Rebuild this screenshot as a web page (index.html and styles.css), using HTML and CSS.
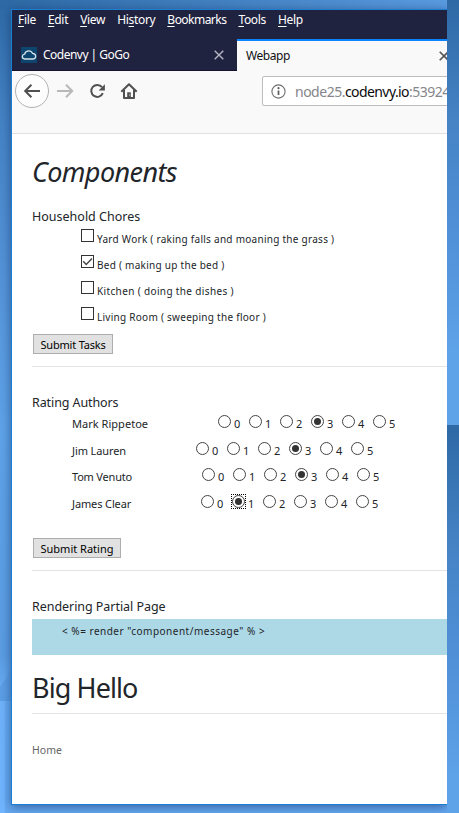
FILE: index.html
```
<!DOCTYPE html>
<html lang="en">
<head>
<meta charset="utf-8">
<title>Webapp</title>
<link rel="stylesheet" href="styles.css">
</head>
<body>
<div class="desktop">
  <div class="view">
    <div class="window">
      <nav class="menu">
        <span class="m-file"><u>F</u>ile</span>
        <span class="m-edit"><u>E</u>dit</span>
        <span class="m-view"><u>V</u>iew</span>
        <span class="m-history">Hi<u>s</u>tory</span>
        <span class="m-bookmarks"><u>B</u>ookmarks</span>
        <span class="m-tools"><u>T</u>ools</span>
        <span><u>H</u>elp</span>
      </nav>
      <div class="tabs">
        <div class="tab">
          <svg class="favicon" width="16" height="16" viewBox="0 0 16 16"><rect width="16" height="16" fill="#0e456f"/><path d="M3.8 12 Q1.3 11.6 1.3 9.4 Q1.4 7.4 3.6 7.1 Q4.6 3.8 7.7 3.8 Q10.5 3.8 11.5 6.3 Q14.6 6.6 14.7 9.2 Q14.6 11.7 12.2 12 Z" fill="none" stroke="#d5e1ea" stroke-width="1.3"/></svg>
          <span class="tab-title">Codenvy | GoGo</span>
          <svg class="close" width="10" height="10" viewBox="0 0 10 10"><path d="M.7 .7 9.3 9.3M9.3 .7 .7 9.3" stroke="#b4b5c2" stroke-width="1.4"/></svg>
        </div>
        <div class="tab active">
          <span class="tab-title webapp">Webapp</span>
          <svg class="close" width="10" height="10" viewBox="0 0 10 10"><path d="M.7 .7 9.3 9.3M9.3 .7 .7 9.3" stroke="#555" stroke-width="1.6"/></svg>
        </div>
      </div>
      <div class="toolbar">
        <svg class="nav-icons" width="140" height="36" viewBox="12 73 140 36" fill="none">
          <circle cx="32" cy="91" r="16.5" fill="#fdfdfd" stroke="#b2b2b2"/>
          <path d="M40 91H25.5M31.4 84.8 25.2 91 31.4 97.2" stroke="#505050" stroke-width="2"/>
          <path d="M57 91H71.5M66 84.8 72.2 91 66 97.2" stroke="#b8b8b8" stroke-width="2"/>
          <path d="M102 87.2A6 6 0 1 0 102.8 93.2" stroke="#505050" stroke-width="2"/>
          <path d="M104.9 84.2V90.4H98.6Z" fill="#505050"/>
          <path d="M121.3 91.8 129 84.2 136.7 91.8M124 90V98H134V90" stroke="#505050" stroke-width="2" stroke-linejoin="round"/>
          <path d="M127.2 98V92.3H130.8V98Z" fill="#505050"/><path d="M129.2 95H130" stroke="#fff"/>
        </svg>
        <div class="address">
          <svg width="15" height="15" viewBox="0 0 15 15"><circle cx="7.5" cy="7.5" r="6.6" fill="none" stroke="#6d6d6d" stroke-width="1.1"/><path d="M7.5 6.5V11" stroke="#5c5c5c" stroke-width="1.7"/><circle cx="7.5" cy="4.2" r="1.1" fill="#5c5c5c"/></svg>
          <span class="url">node25.<b>codenvy.io</b>:53924</span>
        </div>
      </div>
      <main class="page">
        <h1 class="title">Components</h1>

        <h2 class="chores">Household Chores</h2>
        <ul class="checks">
          <li><i class="box"></i><span class="c1">Yard Work ( raking falls and moaning the grass )</span></li>
          <li><i class="box"><svg width="11" height="11" viewBox="0 0 11 11"><path d="M1.2 5.3 4.2 8.4 10 2.4" fill="none" stroke="#444" stroke-width="1.4"/></svg></i><span class="c2">Bed ( making up the bed )</span></li>
          <li><i class="box"></i><span class="c3">Kitchen ( doing the dishes )</span></li>
          <li><i class="box"></i><span class="c4">Living Room ( sweeping the floor )</span></li>
        </ul>
        <button class="tasks">Submit Tasks</button>
        <hr>

        <h2 class="authors">Rating Authors</h2>
        <div class="rate r1"><span class="name">Mark Rippetoe</span><i class="radio"></i><em>0</em><i class="radio"></i><em>1</em><i class="radio"></i><em>2</em><i class="radio on"></i><em>3</em><i class="radio"></i><em>4</em><i class="radio"></i><em>5</em></div>
        <div class="rate r2"><span class="name">Jim Lauren</span><i class="radio"></i><em>0</em><i class="radio"></i><em>1</em><i class="radio"></i><em>2</em><i class="radio on"></i><em>3</em><i class="radio"></i><em>4</em><i class="radio"></i><em>5</em></div>
        <div class="rate r3"><span class="name">Tom Venuto</span><i class="radio"></i><em>0</em><i class="radio"></i><em>1</em><i class="radio"></i><em>2</em><i class="radio on"></i><em>3</em><i class="radio"></i><em>4</em><i class="radio"></i><em>5</em></div>
        <div class="rate r4"><span class="name">James Clear</span><i class="radio"></i><em>0</em><i class="radio on focus"></i><em>1</em><i class="radio"></i><em>2</em><i class="radio"></i><em>3</em><i class="radio"></i><em>4</em><i class="radio"></i><em>5</em></div>
        <button class="rating">Submit Rating</button>
        <hr>

        <h2 class="partial">Rendering Partial Page</h2>
        <div class="message">&lt; %= render "component/message" % &gt;</div>
        <div class="hello">Big Hello</div>
        <hr class="last">
        <a class="home">Home</a>
      </main>
    </div>
  </div>
  <div class="edge"></div>
</div>
</body>
</html>
```
FILE: styles.css
```
* { box-sizing: border-box; }
body { margin: 0; font-family: "Noto Sans", "Open Sans", sans-serif; color: #212529; }
.desktop { display: flex; width: 459px; height: 813px; overflow: hidden; }

/* Wallpaper behind the window */
.view {
  width: 447px; height: 813px; padding: 9px 0 0 11px; overflow: hidden;
  background:
    linear-gradient(90deg, #2e69a5, #5a9be0) 0 0 / 100% 9px no-repeat,
    linear-gradient(122deg, transparent 50%, #5c9ee5 51%) 0 655px / 11px 46px no-repeat,
    linear-gradient(#6fb2fa, #70b5ff) 0 700px / 5px 113px no-repeat,
    linear-gradient(#2e69a5, #4583c5 120px, #5594d9 280px, #5fa3e8 430px, #5b9de2 655px, #68abf4 690px, #66a9f2);
}
.edge {
  width: 12px;
  background:
    linear-gradient(#2e69a5, #4583c5 120px, #5191d8 240px, #5ea2e8 350px, #5ea2e8) 0 0 / 100% 425px no-repeat,
    linear-gradient(#2e69a5, #4583c5 120px, #5191d8 240px, #5ea2e8 350px, #5ea2e8) 0 425px / 100% 388px no-repeat;
}

.window {
  width: 436px; height: 796px; overflow: hidden; background: #fff;
  border: solid #1a7fd4; border-width: 1px 0 1px 1px;
  box-shadow: 0 2px 10px rgba(10, 40, 90, .55);
}

.menu {
  display: flex; height: 28px; padding: 0 0 0 6px; background: #202340;
  color: #fff; font-size: 12px; line-height: 20px; letter-spacing: -.32px;
}
.menu span { margin-right: 12px; flex: none; }
.menu u { text-underline-offset: 2px; text-decoration-thickness: 1px; }
.menu .m-bookmarks { letter-spacing: -.53px; }

.tabs { display: flex; height: 33px; background: #202340; border-bottom: 1px solid #17132e; font-size: 12px; }
.tab { display: flex; align-items: center; width: 225px; padding: 2px 13px 0 9px; color: #fff; flex: none; }
.tab-title { margin-left: 6px; letter-spacing: -.52px; line-height: 18px; }
.close { margin-left: auto; flex: none; }
.tab.active {
  width: 216px; height: 32px; margin-top: 1px; padding: 0 4px 0 3px;
  background: #f9f9fa; border-top: 2px solid #0a84ff; color: #111;
}
.tab .webapp { letter-spacing: -.42px; }

.toolbar { display: flex; height: 63px; background: #f9f9fa; border-bottom: 1px solid #e0e0e1; }
.nav-icons { margin-top: 2px; flex: none; }
.address {
  display: flex; align-items: center; width: 200px; height: 30px; margin: 5px 0 0 110px; padding-left: 8px;
  background: #fff; border: 1px solid #bcbcbc; border-radius: 2px; flex: none;
}
.url { margin: 1px 0 0 9px; color: #85858a; font-size: 14px; line-height: 20px; letter-spacing: -.5px; }
.url b { font-weight: 400; color: #0c0c0d; letter-spacing: -.58px; }

.page { display: flex; flex-direction: column; padding-left: 20px; }
.title { margin: 18px 0 15px; font-size: 27px; line-height: 40px; font-weight: 400; font-style: italic; letter-spacing: -.6px; }
h2 { height: 18px; margin: 0; font-size: 12.5px; line-height: 20px; font-weight: 400; }
.authors { letter-spacing: -.1px; }
.partial { letter-spacing: -.05px; }
hr { width: 100%; height: 1px; margin: 12px 0 26px; border: 0; background: #e3e3e4; flex: none; }

.checks { margin: 0; padding: 0 0 0 49px; list-style: none; }
.checks li { display: flex; height: 26px; padding-top: 4px; font-size: 10px; line-height: 14px; white-space: nowrap; }
.checks span { margin: 3px 0 0 3px; letter-spacing: .27px; }
.box { width: 13px; height: 13px; border: 1px solid #333; background: #fff; }
.box svg { display: block; }
.checks .c3 { letter-spacing: .36px; }

button {
  height: 20px; margin: 5px 0 0 1px; padding: 0; border: 1px solid #adadad; background: #e1e1e1;
  color: #000; font: 11px/20px "Noto Sans", sans-serif; text-align: center; flex: none;
}
.tasks { width: 80px; letter-spacing: -.2px; }
.rating { width: 88px; margin-top: 20px; }

.rate { display: flex; height: 27px; padding: 4px 0 0 40px; font-size: 11px; line-height: 14px; }
.rate .name { width: 146px; margin-top: 2px; letter-spacing: .03px; }
.rate.r2 { height: 26px; }
.rate.r2 .name { width: 124px; letter-spacing: -.1px; }
.rate.r3 .name { width: 130px; letter-spacing: -.2px; }
.rate.r4 .name { width: 129px; letter-spacing: -.12px; }
.rate em { width: 15px; margin: 2px 0 0 3px; font-style: normal; }
.radio { display: grid; place-items: center; width: 13px; height: 13px; border: 1px solid #444; border-radius: 50%; background: #fff; }
.radio.on::before { content: ""; width: 7px; height: 7px; border-radius: 50%; background: #333; }
.radio.focus { position: relative; }
.radio.focus::after { content: ""; position: absolute; inset: -2px; border: 1px dotted #000; }

.message { height: 36px; margin-top: 4px; padding: 5px 0 0 30px; background: #add8e6; font-size: 10px; line-height: 14px; letter-spacing: .5px; }
.hello { margin-top: 12px; font-size: 27px; line-height: 42px; height: 40px; letter-spacing: -.9px; }
hr.last { margin: 6px 0 29px; }
.home { color: #666; font-size: 10.5px; line-height: 14px; }
```
